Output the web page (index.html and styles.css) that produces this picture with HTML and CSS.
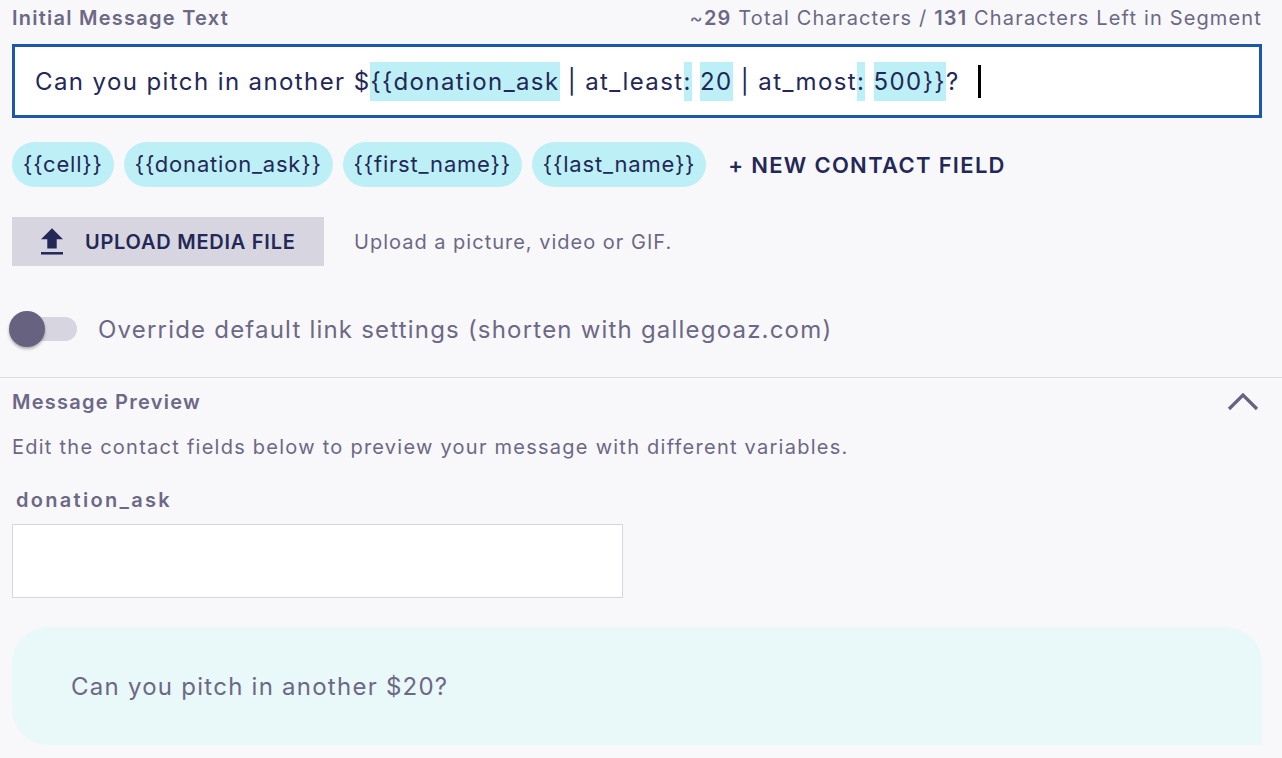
FILE: index.html
```html
<!DOCTYPE html>
<html>
<head>
<meta charset="utf-8">
<link rel="stylesheet" href="styles.css">
</head>
<body>
<div class="page">
  <div class="head-row">
    <div class="label">Initial Message Text</div>
    <div class="count">~<b>29</b> Total Characters / <b>131</b> Characters Left in Segment</div>
  </div>
  <div class="msg-input">
    <span class="msg-text">Can you pitch in another $<span class="hl">{{donation_ask</span> | at_least<span class="hl">:</span> <span class="hl">20</span> | at_most<span class="hl">:</span> <span class="hl">500}}</span>? </span><span class="caret"></span>
  </div>
  <div class="chips">
    <span class="chip">{{cell}}</span>
    <span class="chip">{{donation_ask}}</span>
    <span class="chip">{{first_name}}</span>
    <span class="chip">{{last_name}}</span>
    <span class="new-field">+ NEW CONTACT FIELD</span>
  </div>
  <div class="upload-row">
    <div class="upload-btn">
      <svg class="upload-icon" viewBox="5 3 14 17" width="22" height="27"><path d="M9 16h6v-6h4l-7-7-7 7h4z" fill="#232857"/><path d="M5 18.2h14v1.6H5z" fill="#232857"/></svg>
      <span>UPLOAD MEDIA FILE</span>
    </div>
    <span class="upload-hint">Upload a picture, video or GIF.</span>
  </div>
  <div class="toggle-row">
    <div class="toggle"><span class="track"></span><span class="thumb"></span></div>
    <span class="toggle-label">Override default link settings (shorten with gallegoaz.com)</span>
  </div>
</div>
<div class="divider"></div>
<div class="page">
  <div class="preview-head">
    <div class="label">Message Preview</div>
    <svg class="chevron" width="32" height="18" viewBox="0 0 32 18"><polyline points="2,16 16,2 30,16" fill="none" stroke="#67627f" stroke-width="3.2"/></svg>
  </div>
  <div class="hint">Edit the contact fields below to preview your message with different variables.</div>
  <div class="field-label">donation_ask</div>
  <div class="field-input"></div>
  <div class="bubble">Can you pitch in another $20?</div>
</div>
</body>
</html>
```
FILE: styles.css
```css
html, body {
  margin: 0;
  padding: 0;
  background: #f8f8fb;
  font-family: "Inter", "Open Sans", sans-serif;
  color: #6c6885;
}
.page {
  padding: 0 20px 0 12px;
}
.head-row {
  display: flex;
  justify-content: space-between;
  align-items: center;
  height: 36px;
  margin-bottom: 8px;
}
.label {
  font-size: 20px;
  font-weight: 600;
  letter-spacing: 1.25px;
  color: #6c6885;
}
.count {
  font-size: 20px;
  letter-spacing: 1.15px;
  color: #6c6885;
}
.count b {
  font-weight: 600;
}
.msg-input {
  height: 68px;
  border: 3px solid #1b57ad;
  background: #fff;
  display: flex;
  align-items: center;
  padding-left: 20px;
  font-size: 24px;
  letter-spacing: 1.4px;
  color: #232857;
}
.msg-text {
  white-space: pre;
}
.hl {
  background: #bdeff6;
  padding: 5px 0;
}
.caret {
  display: inline-block;
  width: 3px;
  height: 33px;
  background: #000;
  margin-left: 10px;
}
.chips {
  display: flex;
  align-items: center;
  gap: 10px;
  margin-top: 24px;
  height: 45px;
}
.chip {
  height: 45px;
  line-height: 45px;
  padding: 0 11px;
  border-radius: 23px;
  background: #bdeff6;
  font-size: 22px;
  letter-spacing: 0.8px;
  color: #232857;
}
.new-field {
  margin-left: 12px;
  font-size: 22px;
  font-weight: 600;
  letter-spacing: 1.3px;
  color: #232857;
}
.upload-row {
  display: flex;
  align-items: center;
  margin-top: 30px;
  height: 49px;
}
.upload-btn {
  display: flex;
  align-items: center;
  height: 49px;
  width: 312px;
  box-sizing: border-box;
  padding-left: 29px;
  background: #d6d5e0;
  font-size: 20px;
  font-weight: 600;
  letter-spacing: 0.75px;
  color: #232857;
}
.upload-icon {
  margin-right: 22px;
}
.upload-hint {
  margin-left: 30px;
  font-size: 20px;
  letter-spacing: 1px;
  color: #6c6885;
}
.toggle-row {
  display: flex;
  align-items: center;
  margin-top: 45px;
  height: 36px;
}
.toggle {
  position: relative;
  width: 68px;
  height: 36px;
  margin-left: -3px;
}
.track {
  position: absolute;
  left: 6px;
  top: 6px;
  width: 62px;
  height: 24px;
  border-radius: 12px;
  background: #d6d5e0;
}
.thumb {
  position: absolute;
  left: 0;
  top: 0;
  width: 36px;
  height: 36px;
  border-radius: 50%;
  background: #67627f;
  box-shadow: 0 2px 3px rgba(0,0,0,0.3);
}
.toggle-label {
  margin-left: 21px;
  font-size: 24px;
  letter-spacing: 1.2px;
  color: #6c6885;
}
.divider {
  margin-top: 30px;
  height: 1px;
  background: #dcdce2;
}
.preview-head {
  display: flex;
  justify-content: space-between;
  align-items: center;
  height: 48px;
}
.chevron {
  margin-right: 3px;
}
.hint {
  margin-top: 6px;
  line-height: 30px;
  font-size: 20px;
  letter-spacing: 1.25px;
}
.field-label {
  margin-top: 23px;
  line-height: 30px;
  font-size: 20px;
  font-weight: 600;
  letter-spacing: 2.3px;
  padding-left: 4px;
}
.field-input {
  margin-top: 9px;
  width: 611px;
  height: 74px;
  box-sizing: border-box;
  background: #fff;
  border: 1px solid #d6d5e0;
}
.bubble {
  margin-top: 29px;
  height: 118px;
  box-sizing: border-box;
  display: flex;
  align-items: center;
  padding-left: 59px;
  background: #e9f8f9;
  border-radius: 36px 36px 0 36px;
  font-size: 24px;
  letter-spacing: 1.25px;
  color: #6c6885;
}
```
